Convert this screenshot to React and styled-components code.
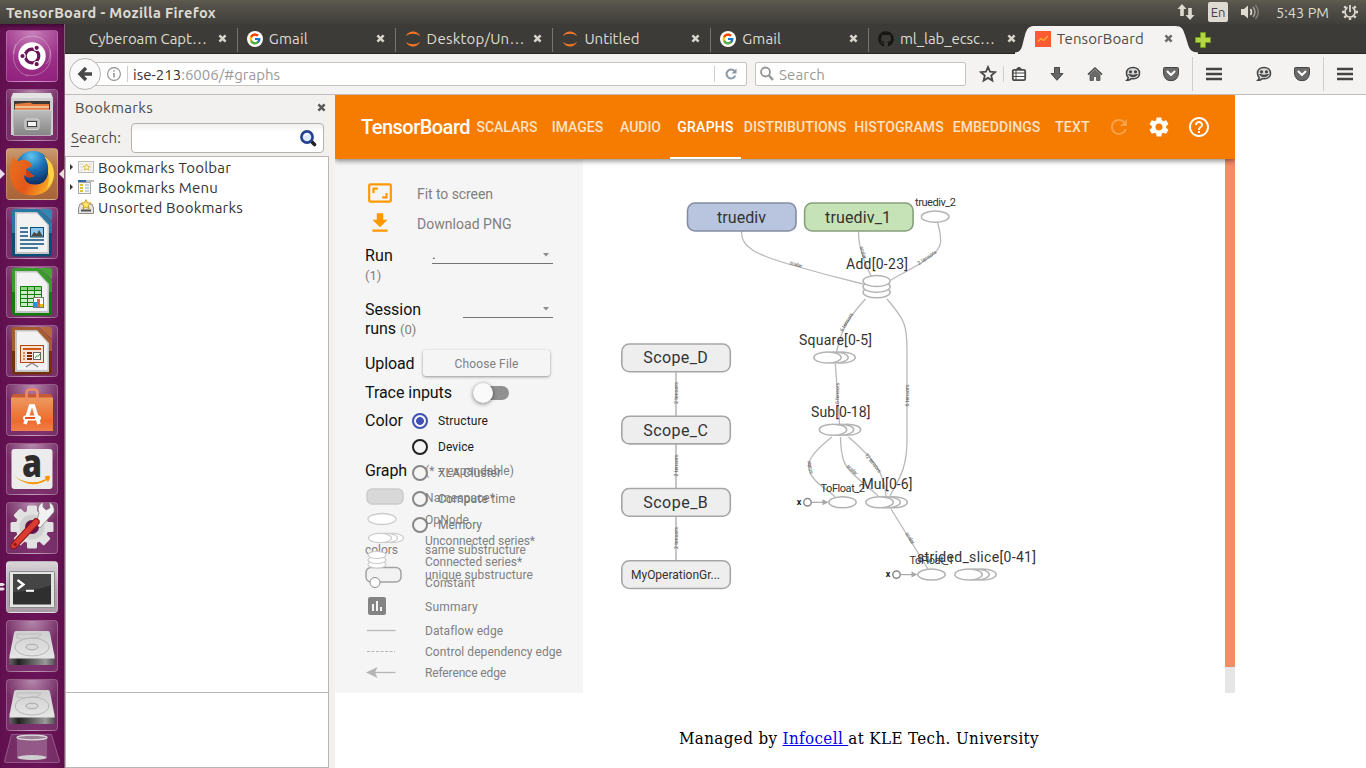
import React, { useLayoutEffect, useRef, useState } from "react";
import styled, { createGlobalStyle } from "styled-components";
import {
  MdRefresh,
  MdSettings,
  MdHelpOutline,
  MdAspectRatio,
  MdFileDownload,
  MdPoll,
} from "react-icons/md";
import { FcGoogle } from "react-icons/fc";
import { FaGithub } from "react-icons/fa";

const Global = createGlobalStyle`
  * { box-sizing: border-box; }
  html, body { margin: 0; padding: 0; }
  body { width: 1366px; height: 768px; overflow: hidden; background: #fff; }
  svg { display: block; }
`;

const uiFont = `Ubuntu, "Noto Sans", "Open Sans", sans-serif`;
const webFont = `Roboto, "Noto Sans", sans-serif`;

/* Text whose tracking is worked out so that it fills a given width. */
const FitSpan = styled.span`
  white-space: pre;
  flex: none;
  display: inline-block;
`;
function Fit({ w, children }) {
  const ref = useRef(null);
  const [spacing, setSpacing] = useState(0);
  useLayoutEffect(() => {
    const el = ref.current;
    el.style.letterSpacing = "0px";
    const natural = el.getBoundingClientRect().width;
    setSpacing((w - natural) / el.textContent.length);
  }, [w]);
  return (
    <FitSpan ref={ref} style={{ letterSpacing: `${spacing}px` }}>
      {children}
    </FitSpan>
  );
}

/* ---------- desktop frame ---------- */

const Desktop = styled.div`
  width: 1366px;
  height: 768px;
  display: flex;
  flex-direction: column;
  font-family: ${uiFont};
  overflow: hidden;
`;
const MenuBar = styled.header`
  height: 24px;
  flex: none;
  display: flex;
  align-items: center;
  justify-content: space-between;
  padding: 0 8px 0 6px;
  background: linear-gradient(#5f5b50, #55524a 20%, #403f3a);
  color: #dfdbd2;
  font-size: 14.5px;
`;
const WindowTitle = styled.div`
  font-weight: 700;
`;
const Indicators = styled.div`
  display: flex;
  align-items: center;
`;
const Indicator = styled.span`
  display: flex;
  margin-right: ${(p) => p.$gap || 0}px;
`;
const Keyboard = styled.span`
  width: 20px;
  height: 20px;
  margin-right: 12px;
  border-radius: 2px;
  background: #dfdbd2;
  color: #454440;
  font-size: 13px;
  display: flex;
  align-items: center;
  justify-content: center;
`;
const Body = styled.div`
  flex: 1;
  min-height: 0;
  display: flex;
`;

/* ---------- launcher ---------- */

const Launcher = styled.nav`
  width: 65px;
  flex: none;
  display: flex;
  flex-direction: column;
  align-items: center;
  padding: 6px 1px 0 0;
  gap: 7px;
  background: linear-gradient(90deg, #61104f, #6b1459 60%, #61104f);
  border-right: 1px solid #8d5a82;
  box-shadow: inset 0 5px 4px -3px #3b0830;
`;
const Tile = styled.div`
  position: relative;
  width: 52px;
  height: 52px;
  flex: none;
  border-radius: 4px;
  border: 1px solid rgba(255, 255, 255, 0.22);
  background: ${(p) => p.$bg || "radial-gradient(circle at 50% 0, rgba(255,255,255,.5), rgba(255,255,255,.12) 50%, rgba(255,255,255,.13))"};
  svg {
    margin: -1px;
  }
`;
const Marker = styled.svg`
  position: absolute;
  top: 21px;
  left: ${(p) => p.$x}px;
`;

const Art = ({ children, h = 52 }) => (
  <svg width="52" height={h} viewBox={`0 0 52 ${h}`}>
    {children}
  </svg>
);

const UbuntuArt = () => (
  <Art>
    <g fill="none" stroke="#fff" strokeOpacity=".3">
      <path d="M8 24C8 8 26 2 36 9C46 16 46 28 40 34M10 14C4 26 8 42 22 46M44 20C48 36 36 48 20 45" />
    </g>
    <circle cx="26" cy="26" r="13.7" fill="#fff" />
    <circle cx="26" cy="26" r="6.8" fill="none" stroke="#6b1459" strokeWidth="3.2" />
    <g stroke="#fff" strokeWidth="1.2" fill="#6b1459">
      <circle cx="16.5" cy="26" r="2.7" />
      <circle cx="30.7" cy="17.8" r="2.7" />
      <circle cx="30.7" cy="34.2" r="2.7" />
    </g>
  </Art>
);
const FilesArt = () => (
  <Art>
    <defs>
      <linearGradient id="cab" x1="0" y1="0" x2="0" y2="1">
        <stop offset="0" stopColor="#bdbdbd" />
        <stop offset="1" stopColor="#858585" />
      </linearGradient>
    </defs>
    <path d="M7 4H45L47 9V24H5V9Z" fill="#e3e3e3" />
    <path d="M5 9H47V46H5Z" fill="#cfcfcf" />
    <path d="M8 12H44V21H8Z" fill="#3d3a38" />
    <path d="M9 15L24 13.5L27 15H43V22H9Z" fill="#e67a3c" />
    <path d="M9 18H43" stroke="#f6d8b4" strokeWidth="1.4" />
    <path d="M6.500 21H46L45 46.500H7.500Z" fill="url(#cab)" stroke="#dedede" strokeWidth=".6" />
    <rect x="19" y="30" width="14" height="10.500" rx="2" fill="#b0b0b0" stroke="#dadada" />
    <rect x="21.500" y="32.500" width="9" height="5" fill="#f4f4f4" stroke="#444" />
  </Art>
);
const FirefoxArt = () => (
  <Art>
    <defs>
      <radialGradient id="globe" cx=".45" cy=".15" r=".8">
        <stop offset="0" stopColor="#5ec5ee" />
        <stop offset=".5" stopColor="#1c6fb5" />
        <stop offset="1" stopColor="#0b2f63" />
      </radialGradient>
      <linearGradient id="fox" x1="0" y1="0" x2="1" y2=".5">
        <stop offset="0" stopColor="#e8731e" />
        <stop offset=".6" stopColor="#e4571b" />
        <stop offset="1" stopColor="#f7a823" />
      </linearGradient>
    </defs>
    <circle cx="27" cy="20.500" r="17.500" fill="url(#globe)" />
    <path d="M5.500 14Q6 10 8 9Q9 13 13 13Q17 10 22 13Q26 15 25 19Q20 20 20 22Q24 25 28 28Q22 31 18 27Q18 37 30 36.500Q40 36 42 26Q44 16 38 8Q48 14 48 27Q46 46 27 47.500Q7 47 4.500 29Q3 20 5.500 14Z" fill="url(#fox)" />
    <path d="M38 8Q48 14 48 27Q47 36 41 41Q44 30 42 24Q43 15 38 8Z" fill="#fbd34a" />
    <path d="M20 22Q24 23 26 27L29 27Q26 31 20 29Z" fill="#c93d18" />
  </Art>
);
const OfficeArt = ({ color, dark, children }) => (
  <Art>
    <path d={`M9 2H33L46 15V46.500Q46 49.500 43 49.500H9Q6 49.500 6 46.500V5Q6 2 9 2Z`} fill={dark} />
    <path d="M9 2H33L46 15V26H6V5Q6 2 9 2Z" fill={color} fillOpacity=".75" />
    <path d="M34 2H43Q46 2 46 5V14Z" fill={color} />
    <path d="M9 5H31L43 18V47H9Z" fill="#c4c4c4" />
    <path d="M11 6.500H31L41.500 18V45H11Z" fill="#f2f2f2" />
    {children}
  </Art>
);
const WriterArt = () => (
  <OfficeArt color="#3187b4" dark="#0b4d75">
    <path d="M14 21H22M14 25H22M14 29H22M14 33H38M14 37H38M14 41H32" stroke="#0d4f7c" strokeWidth="1.7" />
    <rect x="24.500" y="20.500" width="13" height="9.500" fill="#8ec9ec" stroke="#0d4f7c" />
    <path d="M25 29.500L28 25L31 27L33 23L37 29.500Z" fill="#4a4a44" />
  </OfficeArt>
);
const CalcArt = () => (
  <OfficeArt color="#43a832" dark="#137d0c">
    <path d="M14.500 20.500H35.500V40.500H14.500Z" fill="#c9edc4" stroke="#137d0c" />
    <path d="M15 21H35V24.500H15Z" fill="#8fd886" />
    <path d="M21.500 20V41M28.500 20V41M14 24.500H36M14 28.500H36M14 32.500H36M14 36.500H36" stroke="#137d0c" />
    <rect x="27.500" y="31.500" width="10" height="10" fill="#fff" stroke="#777" />
    <path d="M28 36H31V41H28Z" fill="#2295e0" />
    <path d="M31 33H34V41H31Z" fill="#dd6a32" />
    <path d="M34 38H37V41H34Z" fill="#e8b613" />
  </OfficeArt>
);
const ImpressArt = () => (
  <OfficeArt color="#b8693a" dark="#73300c">
    <rect x="14.500" y="20.500" width="23" height="17" fill="#f8e3d6" stroke="#b34a10" />
    <path d="M17 24H35" stroke="#d1590f" strokeWidth="2" />
    <path d="M17 28H19M17 31H19M17 34H19" stroke="#dd8a59" strokeWidth="2" />
    <path d="M21 28H26M21 31H26M21 34H26" stroke="#862f07" strokeWidth="2" />
    <rect x="27.500" y="27.500" width="7" height="7" fill="#fff" stroke="#666" />
    <path d="M29 33L31 30.500L32 31.500L34 29" stroke="#22a022" fill="none" />
    <path d="M26 38L20 42M26 38L32 42" stroke="#888" strokeWidth="1.5" />
  </OfficeArt>
);
const SoftwareArt = () => (
  <Art>
    <defs>
      <linearGradient id="bag" x1="0" y1="0" x2="0" y2="1">
        <stop offset="0" stopColor="#ec9a5e" />
        <stop offset=".7" stopColor="#ee6b2d" />
        <stop offset="1" stopColor="#ef7f49" />
      </linearGradient>
    </defs>
    <path d="M7 10H45L47 14H5Z" fill="#c75a35" />
    <path d="M5 13.500H47V47H5Z" fill="url(#bag)" />
    <path d="M20.500 18V9Q20.500 5.500 24 5.500H28Q31.500 5.500 31.500 9V18" fill="none" stroke="#f08a64" strokeWidth="2.600" />
    <path d="M19 40L24.500 22H27.500L33 40" fill="none" stroke="#fff" strokeWidth="3.600" />
    <path d="M24 22H28" stroke="#fff" strokeWidth="3" />
    <rect x="17" y="31.500" width="18" height="5" rx="2.500" fill="#fff" />
    <path d="M19 34H29" stroke="#e9541d" strokeWidth="2" />
  </Art>
);
const AmazonArt = () => (
  <Art>
    <rect x="5.500" y="6" width="41" height="40" rx="3" fill="#ececec" />
    <text x="26" y="34" textAnchor="middle" fontFamily="Open Sans, sans-serif" fontWeight="800" fontSize="38" textLength="20" lengthAdjust="spacingAndGlyphs" fill="#2c2c2c">a</text>
    <path d="M8 33Q24 44 40 36L38.500 34Q42 32 44 33Q44 37 41.500 39L41 37Q25 47 8 33Z" fill="#f79400" />
  </Art>
);
const SettingsArt = () => (
  <Art>
    <g transform="translate(26 25)">
      {[0, 45, 90, 135].map((a) => (
        <rect key={a} x="-5" y="-21.500" width="10" height="43" rx="1.500" fill="#e2e2e2" transform={`rotate(${a})`} />
      ))}
      <circle r="16.500" fill="#e2e2e2" />
      <circle r="12.500" fill="#d0d0d0" />
      <circle r="7" fill="#641551" />
    </g>
    <path d="M30 24L34 28L48 12Q49 5 43 2L44 8L40 10L37 7L37 2Q30 6 33 13Z" fill="#f1f1f1" stroke="#777" strokeWidth=".7" transform="translate(0 -2)" />
    <path d="M8 43.500L30 20" stroke="#8f1515" strokeWidth="7.400" strokeLinecap="round" />
    <path d="M8 43.500L30 20" stroke="#da3b33" strokeWidth="5.400" strokeLinecap="round" />
    <circle cx="9" cy="42.500" r="1.800" fill="#8c1c1c" />
  </Art>
);
const TerminalArt = () => (
  <Art>
    <rect x="3.500" y="10.500" width="45" height="36" rx="1" fill="#e5e5e3" stroke="#888" />
    <rect x="7" y="13" width="38" height="30.500" fill="#2f2f2f" />
    <path d="M7 13H45V24Q30 30 7 31Z" fill="#454545" />
    <path d="M11.500 19L17.500 23.500L11.500 28" stroke="#fff" strokeWidth="2.300" fill="none" />
    <path d="M20 29.800H28" stroke="#fff" strokeWidth="2" />
  </Art>
);
const DiskArt = () => (
  <Art>
    <defs>
      <linearGradient id="plate" x1="0" y1="0" x2="0" y2="1">
        <stop offset="0" stopColor="#cfcfcf" />
        <stop offset="1" stopColor="#e6e6e6" />
      </linearGradient>
      <linearGradient id="front" x1="0" x2="1">
        <stop offset="0" stopColor="#666" />
        <stop offset=".2" stopColor="#222" />
        <stop offset=".8" stopColor="#999" />
        <stop offset="1" stopColor="#555" />
      </linearGradient>
    </defs>
    <path d="M10 11H42Q43.500 11 44 13L48.500 36V39H3.500V36L8 13Q8.500 11 10 11Z" fill="url(#plate)" />
    <ellipse cx="26" cy="27" rx="17" ry="9" fill="none" stroke="#adadad" strokeWidth=".8" />
    <path d="M11 14H35Q34 18 26 18Q17 20 11 18Z" fill="none" stroke="#b5b5b5" strokeWidth=".7" />
    <ellipse cx="26" cy="27" rx="6" ry="2.800" fill="#d9d9d9" stroke="#999" strokeWidth=".8" />
    <path d="M3.500 38.500H48.500V44Q48.500 45 47.500 45H5Q3.500 45 3.500 44Z" fill="url(#front)" />
  </Art>
);
const TrashArt = () => (
  <svg width="58" height="31" viewBox="0 0 58 31">
    <path d="M8.500 1.500H48.500L56.500 28Q56.500 29.500 55 29.500H3Q1.500 29.500 1.500 28Z" fill="#fff" fillOpacity=".12" stroke="#fff" strokeOpacity=".25" />
    <path d="M14 4H44V25Q29 29 14 25Z" fill="#b08ba8" fillOpacity=".45" />
    <ellipse cx="29" cy="4.500" rx="15" ry="2.400" fill="#9c8197" stroke="#dcdcdc" strokeWidth="1.300" />
    <ellipse cx="29" cy="24.500" rx="14.500" ry="2.500" fill="#cfcfcf" />
  </svg>
);
const TrashSlot = styled.div`
  margin-top: -5px;
  flex: none;
`;

/* ---------- browser chrome ---------- */

const Browser = styled.main`
  flex: 1;
  min-width: 0;
  display: flex;
  flex-direction: column;
`;
const TabStrip = styled.div`
  height: 30px;
  flex: none;
  display: flex;
  align-items: flex-end;
  padding: 0 0 1px 14px;
  background: #3c3b37;
  border-bottom: 1px solid #282724;
`;
const Tab = styled.div`
  width: 157.8px;
  height: 24px;
  flex: none;
  display: flex;
  align-items: center;
  padding: 0 10px 3px 9px;
  border-left: 1px solid ${(p) => (p.$first ? "transparent" : "#77756f")};
  color: #dfdbd2;
  font-size: 15px;
  gap: 6px;
  svg {
    flex: none;
  }
`;
const TabTitle = styled.span`
  flex: 1;
  display: flex;
`;
const ActiveTab = styled.div`
  position: relative;
  width: 175px;
  height: 30px;
  margin: 0 0 -2px -7px;
  flex: none;
  display: flex;
  align-items: center;
  gap: 6px;
  padding: 0 21px 1px 16px;
  color: #4c4c4c;
  font-size: 15px;
  svg {
    flex: none;
    position: relative;
  }
  > svg:first-child {
    position: absolute;
    left: -4px;
    top: 0;
  }
  > span {
    position: relative;
  }
`;
const NewTab = styled.div`
  padding: 0 0 4px 1px;
`;
const NavBar = styled.div`
  height: 41px;
  flex: none;
  display: flex;
  align-items: center;
  padding-left: 20px;
  background: #f4f3f1;
  border-bottom: 1px solid #c0bebb;
  font-size: 15px;
  color: #9a9a9a;
`;
const AddressBox = styled.div`
  position: relative;
  width: 662px;
  height: 24px;
  display: flex;
  align-items: center;
  padding-left: 21px;
  background: #fff;
  border: 1px solid #c6c4c1;
  border-radius: 2px;
  b {
    font-weight: 400;
    color: #333;
  }
`;
const BackButton = styled.div`
  position: absolute;
  left: -17px;
  top: -5px;
  width: 32px;
  height: 32px;
  border-radius: 50%;
  border: 1px solid #b5b3b0;
  background: #fbfafa;
  display: flex;
  align-items: center;
  justify-content: center;
`;
const Divider = styled.i`
  width: 1px;
  height: ${(p) => p.$h || 16}px;
  background: #d0cecb;
  margin: 0 ${(p) => p.$right || 0}px 0 ${(p) => p.$left || 0}px;
`;
const UrlText = styled.div`
  flex: 1;
`;
const SearchBox = styled.div`
  width: 211px;
  height: 24px;
  margin: 0 7px 0 8px;
  display: flex;
  align-items: center;
  gap: 4px;
  padding-left: 3px;
  background: #fff;
  border: 1px solid #c6c4c1;
  border-radius: 2px;
`;
const ToolButton = styled.span`
  width: ${(p) => p.$w || 38}px;
  margin: 0 ${(p) => p.$right || 0}px 0 ${(p) => p.$left || 0}px;
  display: flex;
  justify-content: center;
  flex: none;
`;

const CloseX = ({ color = "#d9d5cc" }) => (
  <svg width="9" height="9" viewBox="0 0 9 9">
    <path d="M1.400 1.400L7.600 7.600M7.600 1.400L1.400 7.600" stroke={color} strokeWidth="2.500" />
  </svg>
);
const GoogleIcon = () => (
  <svg width="16" height="16" viewBox="0 0 16 16">
    <circle cx="8" cy="8" r="8" fill="#fff" />
    <FcGoogle x="1.500" y="1.500" size="13" />
  </svg>
);
const JupyterIcon = () => (
  <svg width="16" height="16" viewBox="0 0 16 16" fill="#f37626">
    <path d="M.8 5.200C2.200 2 5 .5 8 .5S13.800 2 15.200 5.200C13.200 3.500 11 2.700 8 2.700S2.800 3.500 .8 5.200Z" />
    <path d="M.8 10.800C2.200 14 5 15.500 8 15.500S13.800 14 15.200 10.800C13.200 12.500 11 13.300 8 13.300S2.800 12.500 .8 10.800Z" />
  </svg>
);
const ChatIcon = () => (
  <svg width="16" height="16" viewBox="0 0 16 16">
    <path d="M8 1.500C12 1.500 14.500 4 14.500 7.200S12 12.800 8.500 12.800L6 12.700Q4.500 14.500 1.800 14.300Q3.200 13 3.200 11.500Q1.500 10 1.500 7.200C1.500 4 4 1.500 8 1.500Z" fill="#dadada" stroke="#454545" strokeWidth="1.600" />
    <circle cx="5.500" cy="5.800" r="1.600" fill="#454545" />
    <circle cx="10.500" cy="5.800" r="1.600" fill="#454545" />
    <path d="M3.500 8.500Q8 13 12.500 8.500Q8 10 3.500 8.500Z" fill="#454545" stroke="#454545" />
  </svg>
);
const PocketIcon = () => (
  <svg width="16" height="16" viewBox="0 0 16 16">
    <path d="M1.500 1.500H14.500Q15.500 1.500 15.500 2.500V7Q15 14.500 8 14.700Q1 14.500 .5 7V2.500Q.5 1.500 1.500 1.500Z" fill="#6a6a6a" stroke="#454545" />
    <path d="M4.500 5.500L8 9L11.500 5.500" fill="none" stroke="#fff" strokeWidth="2" strokeLinecap="round" strokeLinejoin="round" />
  </svg>
);
const MenuIcon = () => (
  <svg width="16" height="14" viewBox="0 0 16 14">
    <path d="M0 2H16M0 7H16M0 12H16" stroke="#444" strokeWidth="2.700" />
  </svg>
);

const tabs = [
  { title: "Cyberoam Capt…", w: 118, first: true },
  { title: "Gmail", w: 39, icon: <GoogleIcon /> },
  { title: "Desktop/Un…", w: 98, icon: <JupyterIcon /> },
  { title: "Untitled", w: 55, icon: <JupyterIcon /> },
  { title: "Gmail", w: 39, icon: <GoogleIcon /> },
  { title: "ml_lab_ecsc…", w: 95, icon: <FaGithub size={16} color="#171614" /> },
];

/* ---------- bookmarks ---------- */

const Window = styled.div`
  flex: 1;
  min-height: 0;
  display: flex;
`;
const Bookmarks = styled.aside`
  width: 270px;
  flex: none;
  display: flex;
  flex-direction: column;
  background: #f2f1f0;
  color: #4c4c4c;
  font-size: 15px;
`;
const PanelHeading = styled.div`
  height: 26px;
  flex: none;
  display: flex;
  align-items: center;
  justify-content: space-between;
  padding: 0 9px 1px 10px;
`;
const SearchRow = styled.div`
  height: 35px;
  flex: none;
  display: flex;
  align-items: center;
  gap: 10px;
  padding: 0 0 1px 6px;
  > span {
    margin-top: -2px;
  }
  u {
    text-underline-offset: 3px;
  }
`;
const SearchField = styled.div`
  width: 193px;
  height: 30px;
  border: 1px solid #b5b1ac;
  border-radius: 4px;
  background: linear-gradient(#f1f0ef, #fff 30%);
  display: flex;
  align-items: center;
  justify-content: flex-end;
  padding-right: 6px;
`;
const Tree = styled.div`
  width: 264px;
  height: 537px;
  flex: none;
  background: #fff;
  border: 1px solid #bab5b0;
  color: #333;
`;
const TreeRow = styled.div`
  height: 20px;
  display: flex;
  align-items: center;
  gap: 4px;
  padding-left: ${(p) => (p.$leaf ? 12 : 4)}px;
  svg:first-child {
    margin-right: ${(p) => (p.$leaf ? 0 : 1)}px;
  }
`;
const TreeFooter = styled.div`
  width: 264px;
  flex: 1;
  background: #fff;
  border: 1px solid #bab5b0;
  border-top: 0;
`;
const Arrow = () => (
  <svg width="3" height="6" viewBox="0 0 3 6">
    <path d="M0 0L3 3L0 6Z" fill="#333" />
  </svg>
);
const starPath = "M0 -4L1.200 -1.400L4 -1.200L1.900 .7L2.500 3.500L0 2L-2.500 3.500L-1.900 .7L-4 -1.200L-1.200 -1.400Z";

/* ---------- TensorBoard ---------- */

const Page = styled.section`
  flex: 1;
  min-width: 0;
  background: #fff;
  display: flex;
  flex-direction: column;
`;
const Board = styled.div`
  width: 900px;
  flex: none;
  font-family: ${webFont};
`;
const AppBar = styled.div`
  position: relative;
  z-index: 2;
  height: 64px;
  display: flex;
  align-items: center;
  padding-left: 26px;
  background: #f57c00;
  box-shadow: 0 2px 5px rgba(0, 0, 0, 0.45);
  clip-path: inset(0 0 -8px 0);
`;
const Brand = styled.div`
  width: 109px;
  color: #fff;
  font-size: 20px;
  font-weight: 500;
`;
const BoardTab = styled.div`
  width: ${(p) => p.$w}px;
  height: 64px;
  flex: none;
  display: flex;
  align-items: center;
  justify-content: center;
  font-size: 14px;
  font-weight: 500;
  color: ${(p) => (p.$on ? "#fff" : "#fde2c4")};
  border-bottom: 2px solid ${(p) => (p.$on ? "#fff" : "transparent")};
  padding-top: 2px;
`;
const Actions = styled.div`
  display: flex;
  gap: 16px;
  margin-left: 6px;
  color: #fff;
  svg:first-child {
    opacity: 0.28;
  }
`;
const Workspace = styled.div`
  height: 534px;
  display: flex;
`;
const Controls = styled.div`
  width: 248px;
  flex: none;
  background: #f5f5f5;
  padding: 20px 0 0 30px;
  color: #111;
  font-size: 16px;
`;
const Tool = styled.div`
  height: 30px;
  display: flex;
  align-items: center;
  font-size: 14px;
  color: #808080;
  svg {
    color: #ff9800;
    margin: -2px 24px 0 2px;
    width: 26px;
  }
`;
const Field = styled.div`
  display: flex;
  justify-content: space-between;
  height: ${(p) => p.$h}px;
  margin-top: ${(p) => p.$top}px;
  padding-right: 30px;
  line-height: 19px;
  small {
    font-size: 13px;
    color: #808080;
  }
`;
const Select = styled.div`
  width: ${(p) => p.$w}px;
  height: 18px;
  border-bottom: 1px solid #737373;
  display: flex;
  align-items: center;
  justify-content: space-between;
  padding-right: 3px;
  font-size: 14px;
  color: #555;
`;
const ControlRow = styled.div`
  height: 29px;
  margin-top: ${(p) => p.$top || 0}px;
  display: flex;
  align-items: center;
  gap: ${(p) => p.$gap}px;
`;
const FileButton = styled.div`
  width: 127px;
  height: 26px;
  border-radius: 3px;
  background: #f5f5f5;
  box-shadow: 0 1px 3px rgba(0, 0, 0, 0.4);
  color: #808080;
  font-size: 12px;
  display: flex;
  align-items: center;
  justify-content: center;
  padding: 3px 0 0 1px;
  margin-top: -2px;
`;
const Toggle = styled.div`
  width: 34px;
  height: 14px;
  border-radius: 7px;
  background: #919191;
  display: flex;
  align-items: center;
`;
const Knob = styled.div`
  width: 20px;
  height: 20px;
  margin-left: -2px;
  flex: none;
  border-radius: 50%;
  background: #fafafa;
  box-shadow: 0 1px 4px rgba(0, 0, 0, 0.5);
`;
const ColorSection = styled.div`
  position: relative;
  height: 51px;
  margin-top: 1px;
  display: flex;
  line-height: 26px;
`;
const RadioList = styled.div`
  margin-left: 9px;
  font-size: 12px;
`;
const RadioRow = styled.div`
  height: 26px;
  display: flex;
  align-items: center;
  gap: 10px;
  color: ${(p) => (p.$off ? "#757575" : "#1c1c1c")};
`;
const Radio = styled.i`
  width: 16px;
  height: 16px;
  border-radius: 50%;
  border: 2px solid ${(p) => (p.$on ? "#3f51b5" : p.$off ? "#888" : "#212121")};
  background: ${(p) => (p.$on ? "radial-gradient(circle, #3f51b5 3.5px, transparent 4.3px)" : "transparent")};
`;
/* Swatch key that spills over the graph legend below it. */
const SwatchKey = styled.div`
  position: absolute;
  left: 0;
  top: 129px;
  display: grid;
  grid-template-columns: 60px auto;
  grid-auto-rows: 25px;
  align-items: center;
  justify-items: start;
  font-size: 12px;
  color: #808080;
`;
const LegendHead = styled.div`
  height: 28px;
  line-height: 24px;
  display: flex;
  gap: 18px;
  small {
    font-size: 12px;
    color: #808080;
  }
`;
const LegendRow = styled.div`
  position: relative;
  z-index: 1;
  height: ${(p) => p.$h}px;
  display: flex;
  align-items: center;
  font-size: 12px;
  color: #808080;
  svg {
    flex: none;
    overflow: visible;
  }
`;
const LegendLabel = styled.span`
  margin-left: 16px;
`;
const Canvas = styled.div`
  flex: 1;
`;
const Rail = styled.div`
  width: 10px;
  background: #e6e6e6;
  > i {
    display: block;
    height: 508px;
    background: #f08e66;
  }
`;
const Footnote = styled.footer`
  display: flex;
  justify-content: center;
  padding: 35px 0 0 17px;
  font: 16.8px "DejaVu Serif Condensed", "DejaVu Serif", serif;
  font-stretch: condensed;
  color: #000;
  a {
    color: #0000ee;
    text-decoration: underline;
  }
`;

const E = { fill: "#fff", stroke: "#b3b3b3", strokeWidth: 1.5 };

const legend = [
  { h: 22, w: 70, label: "Namespace*", icon: <rect x="2" y="1" width="36" height="15" rx="5" fill="#d8d8d8" stroke="#ccc" strokeWidth="1.500" /> },
  { h: 21, w: 44, label: "OpNode", icon: <ellipse cx="17" cy="10" rx="14" ry="5.500" fill="#fff" stroke="#ccc" strokeWidth="1.300" /> },
  { h: 21, w: 110, label: "Unconnected series*", icon: <g fill="#fff" stroke="#ccc" strokeWidth="1.200"><ellipse cx="27" cy="8" rx="11.500" ry="4.600" /><ellipse cx="21" cy="8" rx="11.500" ry="4.600" /><ellipse cx="15" cy="8" rx="11.500" ry="4.600" /></g> },
  { h: 21, w: 97, label: "Connected series*", icon: <g fill="#fff" stroke="#ccc" strokeWidth="1.200"><ellipse cx="12" cy="13.500" rx="9" ry="3.500" /><ellipse cx="12" cy="9" rx="9" ry="3.500" /><ellipse cx="12" cy="4" rx="9" ry="3.500" /></g> },
  { h: 22, w: 50, label: "Constant", icon: <circle cx="10" cy="9.500" r="5" fill="#fff" stroke="#8c8c8c" /> },
  { h: 26, w: 53, label: "Summary", icon: <MdPoll x="0" y="-3" size="24" color="#848484" /> },
  { h: 21, w: 78, label: "Dataflow edge", icon: <path d="M2 10.500H30.500" stroke="#bbb" strokeWidth="1.400" /> },
  { h: 21, w: 137, label: "Control dependency edge", icon: <path d="M2 10.500H30" stroke="#b5b5b5" strokeWidth="1.200" strokeDasharray="3 1.500" /> },
  { h: 21, w: 81, label: "Reference edge", icon: <g><path d="M8 10.500H30.500" stroke="#b5b5b5" strokeWidth="1.300" /><path d="M1 10.500L12.500 5L10 10.500L12.500 16Z" fill="#b5b5b5" /></g> },
];

const scopes = [
  { y: 344, t: "Scope_D" },
  { y: 416.2, t: "Scope_C" },
  { y: 488.5, t: "Scope_B" },
  { y: 560.8, t: "MyOperationGr...", small: true },
];
const series = [
  { x: 827.5, y: 357.500 },
  { x: 833, y: 429.700 },
  { x: 879.600, y: 502.300 },
  { x: 968.500, y: 574.500 },
];
const edges = [
  "M741.7 231C740 247 757 255 790 264.5Q826 275 863 284",
  "M858.6 231C858 246 864 262 871 276",
  "M937.5 222.500C943 242 942 248 930 257C915 268 900 274 891 280",
  "M865.5 299C846 320 841 332 836.500 352",
  "M887 299C905 320 907 325 907 350L907 440C907 470 898 480 890 496",
  "M835.3 364C837 385 838 400 839.500 424",
  "M832 437C805 458 804 468 815 480C822 488 830 491 835 497",
  "M840.5 437C841 460 845 466 852 473C860 481 872 490 878 496",
  "M848.5 437C875 460 884 472 886 496",
  "M891 509L928 569",
];
const edgeLabels = [
  { x: 795.500, y: 266, r: 17, t: "scalar", w: 13 },
  { x: 861.500, y: 253, r: 75, t: "scalar", w: 13 },
  { x: 928, y: 259, r: -35, t: "2 tensors", w: 22 },
  { x: 848, y: 323, r: -58, t: "6 tensors", w: 21 },
  { x: 839, y: 393.500, r: -88, t: "6 tensors", w: 21 },
  { x: 909, y: 395.500, r: -90, t: "6 tensors", w: 22 },
  { x: 811.500, y: 467, r: -100, t: "scalar", w: 13 },
  { x: 851, y: 471, r: 42, t: "scalar", w: 13 },
  { x: 871.500, y: 464, r: 52, t: "12 tensors", w: 23 },
  { x: 908.500, y: 539, r: 58, t: "scalar", w: 13 },
  { x: 678, y: 393, r: -90, t: "2 tensors", w: 22 },
  { x: 678, y: 465.500, r: -90, t: "2 tensors", w: 22 },
  { x: 678, y: 538, r: -90, t: "2 tensors", w: 22 },
];
const nodeLabels = [
  { x: 717, y: 222.600, s: 16, w: 49, t: "truediv" },
  { x: 825, y: 222.600, s: 16, w: 66, t: "truediv_1" },
  { x: 915, y: 206, s: 11, w: 41, t: "truediv_2" },
  { x: 846, y: 269, s: 14, w: 62, t: "Add[0-23]" },
  { x: 799, y: 345, s: 14, w: 73, t: "Square[0-5]" },
  { x: 811, y: 417, s: 14, w: 59.500, t: "Sub[0-18]" },
  { x: 820.500, y: 492, s: 11, w: 44.500, t: "ToFloat_2" },
  { x: 861.500, y: 489, s: 14, w: 51, t: "Mul[0-6]" },
  { x: 909.500, y: 564, s: 11, w: 44.500, t: "ToFloat_1" },
  { x: 917, y: 562, s: 14, w: 119, t: "strided_slice[0-41]" },
];
const constants = [
  { x: 807.500, y: 502.300 },
  { x: 896.500, y: 574.600 },
];

function Graph() {
  return (
    <svg width="642" height="534" viewBox="583 159 642 534" fontFamily={webFont}>
      <path d="M676 371V561" stroke="#c0c0c0" strokeWidth="1.800" />
      {edges.map((d) => (
        <path key={d} d={d} fill="none" stroke="#b9b9b9" strokeWidth="1.300" />
      ))}
      <rect x="687.500" y="203" width="108.500" height="28" rx="7.500" fill="#b9c5de" stroke="#838da3" strokeWidth="1.600" />
      <rect x="804.600" y="203" width="108.500" height="28" rx="7.500" fill="#c5e3b6" stroke="#87a07b" strokeWidth="1.600" />
      {scopes.map((s) => (
        <g key={s.t}>
          <rect x="621.800" y={s.y} width="108.500" height="27.700" rx="7.500" fill="#eee" stroke="#a6a6a6" strokeWidth="1.600" />
          <text x={s.small ? 631 : 643.300} y={s.y + (s.small ? 18.200 : 19.300)} fontSize={s.small ? 12 : 16} textLength={s.small ? 89 : 64.500} fill="#333">
            {s.t}
          </text>
        </g>
      ))}
      <ellipse cx="935.200" cy="216.700" rx="13.800" ry="5.600" {...E} />
      {[292.300, 286.700, 281].map((y) => (
        <ellipse key={y} cx="876.600" cy={y} rx="13.600" ry="5.500" {...E} />
      ))}
      {series.map((s) =>
        [14, 7, 0].map((dx) => (
          <ellipse key={`${s.x}-${dx}`} cx={s.x + dx} cy={s.y} rx="13.700" ry="5.500" {...E} />
        ))
      )}
      {constants.map((c) => (
        <g key={c.x}>
          <text x={c.x - 10.700} y={c.y + 2.800} fontSize="9" fontWeight="700" fill="#222">x</text>
          <circle cx={c.x} cy={c.y} r="3.700" fill="#fff" stroke="#8a8a8a" strokeWidth="1.500" />
          <path d={`M${c.x + 4.500} ${c.y}h11`} stroke="#a8a8a8" strokeWidth="1.200" />
          <path d={`M${c.x + 15} ${c.y - 3}l6 3l-6 3z`} fill="#a8a8a8" />
          <ellipse cx={c.x + 35} cy={c.y} rx="13.700" ry="5.500" {...E} />
        </g>
      ))}
      {edgeLabels.map((l) => (
        <text key={`${l.x}-${l.y}`} transform={`translate(${l.x} ${l.y}) rotate(${l.r})`} textAnchor="middle" fontSize="5.300" textLength={l.w} fill="#555">
          {l.t}
        </text>
      ))}
      {nodeLabels.map((n) => (
        <text key={n.t} x={n.x} y={n.y} fontSize={n.s} textLength={n.w} fill="#333">
          {n.t}
        </text>
      ))}
    </svg>
  );
}

const Caret = () => (
  <svg width="8" height="4" viewBox="0 0 8 4">
    <path d="M1 0H7L4 3.500Z" fill="#8c8c8c" />
  </svg>
);

const boardTabs = [
  ["SCALARS", 74, 61],
  ["IMAGES", 67, 51.5],
  ["AUDIO", 59, 41],
  ["GRAPHS", 71, 56.5],
  ["DISTRIBUTIONS", 108, 102.5],
  ["HISTOGRAMS", 100, 89.500],
  ["EMBEDDINGS", 95, 87.500],
  ["TEXT", 57, 35],
];

export default function App() {
  return (
    <Desktop>
      <Global />
      <MenuBar>
        <WindowTitle><Fit w={210}>TensorBoard - Mozilla Firefox</Fit></WindowTitle>
        <Indicators>
          <Indicator $gap={13}>
            <svg width="18" height="18" viewBox="0 0 18 18" fill="#dfdbd2">
              <path d="M5 1L9.500 6H6.800V13H3.200V6H.5Z" />
              <path d="M13 17L17.500 12H14.800V5H11.200V12H8.500Z" />
            </svg>
          </Indicator>
          <Keyboard>En</Keyboard>
          <Indicator $gap={16}>
            <svg width="20" height="16" viewBox="0 0 20 16">
              <path d="M1 5H4L8 1.500V14.500L4 11H1Z" fill="#dfdbd2" />
              <g fill="none" strokeWidth="1.600">
                <path d="M10.500 5Q12.500 8 10.500 11" stroke="#dfdbd2" />
                <path d="M13 3Q17 8 13 13" stroke="#a19e96" />
                <path d="M15.500 1Q21 8 15.500 15" stroke="#7d7a72" />
              </g>
            </svg>
          </Indicator>
          <Indicator $gap={13}><Fit w={53}>5:43 PM</Fit></Indicator>
          <svg width="16" height="16" viewBox="0 0 16 16" fill="none" stroke="#dfdbd2">
            <circle cx="8" cy="8" r="5" strokeWidth="1.700" />
            <g strokeWidth="2.400">
              <path d="M8 2V8" stroke="#4b4943" strokeWidth="4.500" />
              <path d="M8 1V8" strokeWidth="1.800" />
              <path d="M0 8H2.500M13.500 8H16M8 13.500V16M2.300 2.300L4 4M13.700 2.300L12 4M2.300 13.700L4 12M13.700 13.700L12 12" />
            </g>
          </svg>
        </Indicators>
      </MenuBar>
      <Body>
        <Launcher>
          <Tile $bg="radial-gradient(circle at 50% 0, #c783ba, #9c2f88 60%, #8f1f7c)"><UbuntuArt /></Tile>
          <Tile><FilesArt /></Tile>
          <Tile $bg="linear-gradient(#c99a72, #b87541 40%, #a9653a)">
            <FirefoxArt />
            <Marker $x={-6} width="5" height="10"><path d="M0 0L5 5L0 10Z" fill="#e6dfe4" /></Marker>
            <Marker $x={53} width="5" height="10"><path d="M5 0L0 5L5 10Z" fill="#e6dfe4" /></Marker>
          </Tile>
          <Tile><WriterArt /></Tile>
          <Tile><CalcArt /></Tile>
          <Tile><ImpressArt /></Tile>
          <Tile><SoftwareArt /></Tile>
          <Tile><AmazonArt /></Tile>
          <Tile><SettingsArt /></Tile>
          <Tile $bg="linear-gradient(#d9d4d8, #b5a9b3 50%, #a99ba6)">
            <TerminalArt />
            <Marker $x={-6} width="5" height="10"><path d="M0 1H3L5 2.500L3 4H0ZM0 5.500H3L5 7L3 8.500H0Z" fill="#e6dfe4" /></Marker>
          </Tile>
          <Tile><DiskArt /></Tile>
          <Tile><DiskArt /></Tile>
          <TrashSlot><TrashArt /></TrashSlot>
        </Launcher>
        <Browser>
          <TabStrip>
            {tabs.map((t, i) => (
              <Tab key={i} $first={t.first}>
                {t.icon}
                <TabTitle><Fit w={t.w}>{t.title}</Fit></TabTitle>
                <CloseX />
              </Tab>
            ))}
            <ActiveTab>
              <svg width="183" height="30" viewBox="0 0 183 30">
                <path d="M0 30V28.500C8 28 7 20 10 11C12 4 14 2 20 2H160C167 2 168 5 170 11C174 22 173 28 183 28.500V30Z" fill="#f4f3f1" />
              </svg>
              <svg width="16" height="16" viewBox="0 0 16 16">
                <path d="M0 0H16V16H0Z" fill="#fc5a33" />
                <path d="M3 10.500L6 7.500L8.500 9.500L13 5" fill="none" stroke="#ffab30" strokeWidth="1.400" />
              </svg>
              <TabTitle><Fit w={87}>TensorBoard</Fit></TabTitle>
              <CloseX color="#6a6a68" />
            </ActiveTab>
            <NewTab>
              <svg width="16" height="16" viewBox="0 0 16 16">
                <path d="M5.500 .5H10.500V5.500H15.500V10.500H10.500V15.500H5.500V10.500H.5V5.500H5.500Z" fill="#b8d545" stroke="#6c9a1e" />
              </svg>
            </NewTab>
          </TabStrip>
          <NavBar>
            <AddressBox>
              <BackButton>
                <svg width="16" height="16" viewBox="0 0 16 16">
                  <path d="M9 2L3 8L9 14M3.500 8H15" fill="none" stroke="#484848" strokeWidth="3.400" />
                </svg>
              </BackButton>
              <svg width="14" height="14" viewBox="0 0 14 14">
                <circle cx="7" cy="7" r="6.400" fill="none" stroke="#8e8e8e" strokeWidth="1.100" />
                <path d="M7 6V10.500M7 3.200V4.700" stroke="#8e8e8e" strokeWidth="1.500" />
              </svg>
              <Divider $left={6} $right={5} />
              <UrlText><Fit w={147}><b>ise-213</b>:6006/#graphs</Fit></UrlText>
              <Divider $right={10} />
              <svg width="12" height="12" viewBox="0 0 12 12">
                <path d="M9.500 3A4.500 4.500 0 1 0 10.300 7.500" fill="none" stroke="#8b98a8" strokeWidth="2" />
                <path d="M11.500 .5V5.500H6.500Z" fill="#8b98a8" />
              </svg>
              <Divider $right={8} $h={0.01} />
            </AddressBox>
            <SearchBox>
              <svg width="16" height="16" viewBox="0 0 16 16" fill="none" stroke="#979797">
                <circle cx="6.500" cy="6" r="4.500" strokeWidth="1.800" />
                <path d="M9.800 9.300L14 14" strokeWidth="2.400" />
              </svg>
              <Fit w={46}>Search</Fit>
            </SearchBox>
            <ToolButton $w={30}>
              <svg width="18" height="18" viewBox="0 0 18 18">
                <path d="M9 2L11 6.700L16 7.200L12.200 10.500L13.400 15.600L9 12.900L4.600 15.600L5.800 10.500L2 7.200L7 6.700Z" fill="none" stroke="#4a4a4a" strokeWidth="1.800" />
              </svg>
            </ToolButton>
            <Divider />
            <ToolButton $w={30} $right={4}>
              <svg width="16" height="16" viewBox="0 0 16 16">
                <path d="M5 2.500H6L7 1H9L10 2.500H11V4H5Z" fill="#4a4a4a" />
                <rect x="1.800" y="3.800" width="12.400" height="10.400" rx="1.500" fill="#fafafa" stroke="#4a4a4a" strokeWidth="1.800" />
                <path d="M5 3V14M2 7H14M2 10.500H14" stroke="#4a4a4a" />
              </svg>
            </ToolButton>
            <ToolButton>
              <svg width="16" height="16" viewBox="0 0 16 16">
                <path d="M5.500 1.500H10.500V7.500H14L8 14.300L2 7.500H5.500Z" fill="#666" stroke="#484848" />
              </svg>
            </ToolButton>
            <ToolButton>
              <svg width="16" height="16" viewBox="0 0 16 16">
                <path d="M3 8.500L8 4L13 8.500V14.500H9.500V10.500H6.500V14.500H3Z" fill="#6a6a6a" stroke="#484848" strokeWidth=".7" />
                <path d="M1 8.700L8 2L15 8.700" fill="none" stroke="#484848" strokeWidth="1.600" />
              </svg>
            </ToolButton>
            <ToolButton><ChatIcon /></ToolButton>
            <ToolButton><PocketIcon /></ToolButton>
            <Divider $h={34} $left={2} />
            <ToolButton $w={42} $right={10}><MenuIcon /></ToolButton>
            <ToolButton><ChatIcon /></ToolButton>
            <ToolButton><PocketIcon /></ToolButton>
            <Divider $h={34} $left={2} />
            <ToolButton $w={42}><MenuIcon /></ToolButton>
          </NavBar>
          <Window>
            <Bookmarks>
              <PanelHeading>
                <Fit w={78}>Bookmarks</Fit>
                <CloseX color="#5a5a58" />
              </PanelHeading>
              <SearchRow>
                <Fit w={50}><u>S</u>earch:</Fit>
                <SearchField>
                  <svg width="18" height="18" viewBox="0 0 18 18">
                    <path d="M11.500 11.500L15.500 15.500" stroke="#222" strokeWidth="3.600" strokeLinecap="round" />
                    <circle cx="8" cy="8" r="5.600" fill="#dce8f6" stroke="#25408f" strokeWidth="2.600" />
                    <path d="M5.500 7Q7 4.500 9.500 5.500" stroke="#fff" fill="none" strokeWidth="1.300" />
                  </svg>
                </SearchField>
              </SearchRow>
              <Tree>
                <TreeRow>
                  <Arrow />
                  <svg width="16" height="14" viewBox="0 0 16 14">
                    <rect x=".5" y="1.500" width="15" height="11" fill="#f4f4f2" stroke="#bdbbb6" />
                    <path d="M2 4H5M2 7H5M2 10H5M11 4H14M11 7H14M11 10H14" stroke="#dcdad6" />
                    <path d={starPath} transform="translate(8.500 7.200) scale(.8)" fill="#fff8c9" stroke="#d9ae16" />
                  </svg>
                  <Fit w={133}>Bookmarks Toolbar</Fit>
                </TreeRow>
                <TreeRow>
                  <Arrow />
                  <svg width="16" height="16" viewBox="0 0 16 16">
                    <path d="M0 1H8V3.500H0Z" fill="#3465a4" />
                    <path d="M8 2H16" stroke="#aaa" strokeWidth="1.500" />
                    <rect x=".5" y="3.500" width="12" height="11" fill="#f8f8f6" stroke="#a9a8a4" />
                    <path d="M7 6H11M7 9H11M7 12H11" stroke="#8fa9c8" />
                    <path d="M3.500 5V13" stroke="#dcbf3a" strokeWidth="3" strokeDasharray="2 1" />
                  </svg>
                  <Fit w={120}>Bookmarks Menu</Fit>
                </TreeRow>
                <TreeRow $leaf>
                  <svg width="16" height="16" viewBox="0 0 16 16">
                    <path d="M2 5H14L15.500 9V14.500H.5V9Z" fill="#e4e3df" stroke="#8d8c87" />
                    <path d="M3 11.500H13" stroke="#555" strokeWidth="2" />
                    <path d={starPath} transform="translate(8 5.500) scale(1.200)" fill="#ffe873" stroke="#c79a10" strokeWidth=".8" />
                  </svg>
                  <Fit w={145}>Unsorted Bookmarks</Fit>
                </TreeRow>
              </Tree>
              <TreeFooter />
            </Bookmarks>
            <Page>
              <Board>
                <AppBar>
                  <Brand><Fit w={109}>TensorBoard</Fit></Brand>
                  {boardTabs.map(([t, w, tw]) => (
                    <BoardTab key={t} $w={w} $on={t === "GRAPHS"}><Fit w={tw}>{t}</Fit></BoardTab>
                  ))}
                  <Actions>
                    <MdRefresh size={24} />
                    <MdSettings size={24} />
                    <MdHelpOutline size={24} />
                  </Actions>
                </AppBar>
                <Workspace>
                  <Controls>
                    <Tool><MdAspectRatio size={26} /><Fit w={76}>Fit to screen</Fit></Tool>
                    <Tool><MdFileDownload size={26} /><Fit w={94.5}>Download PNG</Fit></Tool>
                    <Field $h={40} $top={7}>
                      <div><Fit w={28}>Run</Fit><br /><small>(1)</small></div>
                      <Select $w={121}>.<Caret /></Select>
                    </Field>
                    <Field $h={38} $top={14}>
                      <div><Fit w={56}>Session</Fit><br /><Fit w={31}>runs</Fit> <small>(0)</small></div>
                      <Select $w={90}><span /><Caret /></Select>
                    </Field>
                    <ControlRow $top={11} $gap={8}>
                      <Fit w={49.5}>Upload</Fit>
                      <FileButton><Fit w={64}>Choose File</Fit></FileButton>
                    </ControlRow>
                    <ControlRow $gap={23}>
                      <Fit w={87}>Trace inputs</Fit>
                      <Toggle><Knob /></Toggle>
                    </ControlRow>
                    <ColorSection>
                      <Fit w={38}>Color</Fit>
                      <RadioList>
                        <RadioRow><Radio $on /><Fit w={50}>Structure</Fit></RadioRow>
                        <RadioRow><Radio /><Fit w={36}>Device</Fit></RadioRow>
                        <RadioRow $off><Radio $off /><Fit w={63}>XLA Cluster</Fit></RadioRow>
                        <RadioRow $off><Radio $off /><Fit w={77.5}>Compute time</Fit></RadioRow>
                        <RadioRow $off><Radio $off /><Fit w={44}>Memory</Fit></RadioRow>
                      </RadioList>
                      <SwatchKey>
                        <Fit w={33}>colors</Fit><Fit w={101}>same substructure</Fit>
                        <svg width="38" height="18" viewBox="0 0 38 18"><rect x="1" y="1.500" width="35" height="14.500" rx="5" fill="#f2f2f2" stroke="#a3a3a3" strokeWidth="1.500" /></svg>
                        <Fit w={108}>unique substructure</Fit>
                      </SwatchKey>
                    </ColorSection>
                    <LegendHead><Fit w={42}>Graph</Fit><small><Fit w={89}>(* = expandable)</Fit></small></LegendHead>
                    {legend.map((l) => (
                      <LegendRow key={l.label} $h={l.h}>
                        <svg width="44" height="21" viewBox="0 0 44 21">{l.icon}</svg>
                        <LegendLabel><Fit w={l.w}>{l.label}</Fit></LegendLabel>
                      </LegendRow>
                    ))}
                  </Controls>
                  <Canvas><Graph /></Canvas>
                  <Rail><i /></Rail>
                </Workspace>
              </Board>
              <Footnote><Fit w={360}>Managed by <a>Infocell </a>at KLE Tech. University</Fit></Footnote>
            </Page>
          </Window>
        </Browser>
      </Body>
    </Desktop>
  );
}
